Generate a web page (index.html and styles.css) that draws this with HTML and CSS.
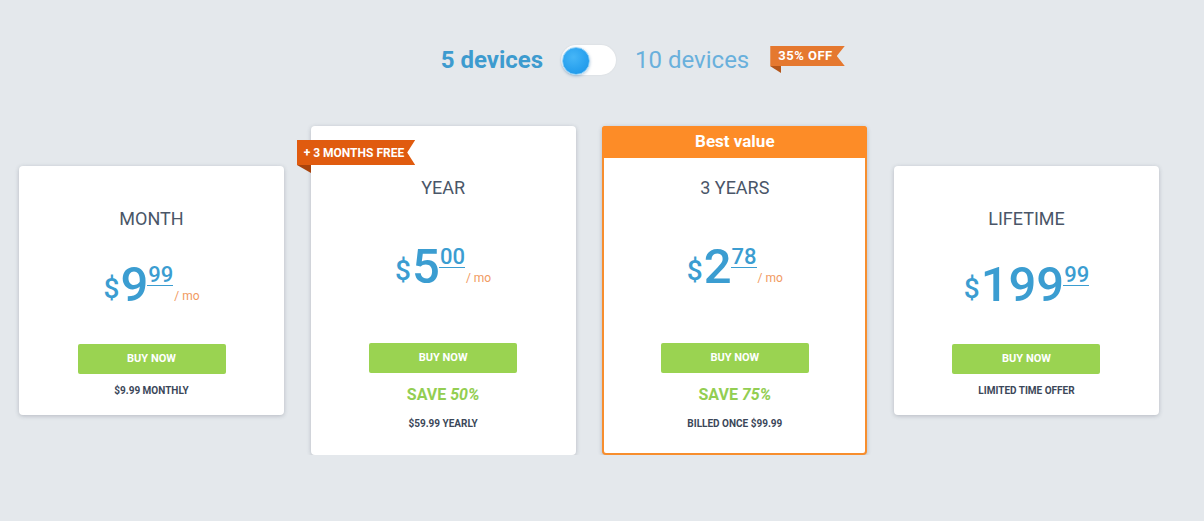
FILE: index.html
```html
<!DOCTYPE html>
<html lang="en">
<head>
<meta charset="utf-8">
<title>Pricing</title>
<link rel="stylesheet" href="styles.css">
</head>
<body>
<div class="page">
  <div class="switcher">
    <span class="opt active">5 devices</span>
    <span class="toggle"><span class="knob"></span></span>
    <span class="opt">10 devices<span class="badge"><span class="badge-body">35% OFF</span></span></span>
  </div>

  <div class="plans">
    <div class="card compact">
      <div class="title">MONTH</div>
      <div class="price"><span class="cur">$</span><span class="int">9</span><span class="cents">99</span><span class="per">/ mo</span></div>
      <a class="buy">BUY NOW</a>
      <div class="note">$9.99 MONTHLY</div>
    </div>

    <div class="card tall">
      <span class="ribbon"><span class="ribbon-body">+ 3 MONTHS FREE</span></span>
      <div class="title">YEAR</div>
      <div class="price"><span class="cur">$</span><span class="int">5</span><span class="cents">00</span><span class="per">/ mo</span></div>
      <a class="buy">BUY NOW</a>
      <div class="save">SAVE <em>50%</em></div>
      <div class="note">$59.99 YEARLY</div>
    </div>

    <div class="card tall best">
      <div class="best-head">Best value</div>
      <div class="title">3 YEARS</div>
      <div class="price"><span class="cur">$</span><span class="int">2</span><span class="cents">78</span><span class="per">/ mo</span></div>
      <a class="buy">BUY NOW</a>
      <div class="save">SAVE <em>75%</em></div>
      <div class="note">BILLED ONCE $99.99</div>
    </div>

    <div class="card compact">
      <div class="title">LIFETIME</div>
      <div class="price"><span class="cur">$</span><span class="int">199</span><span class="cents">99</span></div>
      <a class="buy">BUY NOW</a>
      <div class="note">LIMITED TIME OFFER</div>
    </div>
  </div>
</div>
</body>
</html>
```

FILE: styles.css
```css
* { box-sizing: border-box; }
html, body {
  margin: 0;
  padding: 0;
  background: #e4e8ec;
  font-family: Roboto, "Liberation Sans", Arial, sans-serif;
}
.page {
  width: 1140px;
  margin-left: 19px;
  padding-top: 45px;
}

/* device switcher */
.switcher {
  display: flex;
  justify-content: center;
  align-items: center;
  height: 30px;
  padding-left: 12px;
}
.opt {
  font-size: 24px;
  line-height: 30px;
  color: #69b0dc;
  position: relative;
}
.opt.active {
  font-weight: 700;
  color: #3d9bcf;
}
.toggle {
  position: relative;
  width: 55px;
  height: 30px;
  margin: 0 19px 0 18px;
  border-radius: 15px;
  background: #ffffff;
  box-shadow: 0 0 2px rgba(0, 0, 0, 0.08);
}
.knob {
  position: absolute;
  left: 1px;
  top: 2px;
  width: 28px;
  height: 28px;
  border-radius: 50%;
  background: radial-gradient(circle at 40% 35%, #46b6f7 0%, #2aa2ef 55%, #1b93e4 100%);
  border: 1px solid #8ccff7;
  box-shadow: 0 1px 3px rgba(20, 90, 150, 0.35);
}
.badge {
  position: absolute;
  left: calc(100% + 21px);
  top: 1px;
  display: block;
}
.badge-body {
  display: block;
  height: 20px;
  padding: 0 12px 0 8px;
  background: #e5782f;
  color: #ffffff;
  font-size: 13px;
  font-weight: 700;
  line-height: 20px;
  letter-spacing: 0.5px;
  white-space: nowrap;
  clip-path: polygon(0 0, 100% 0, calc(100% - 8px) 50%, 100% 100%, 0 100%);
}
.badge::after {
  content: "";
  position: absolute;
  left: 0;
  top: 100%;
  border-top: 7px solid #b5561a;
  border-left: 11px solid transparent;
}

/* plans */
.plans {
  display: grid;
  grid-template-columns: repeat(4, 265px);
  column-gap: 26.67px;
  align-items: center;
  margin-top: 51px;
}
.card {
  position: relative;
  background: #ffffff;
  border-radius: 4px;
  box-shadow: 0 1px 4px rgba(60, 70, 85, 0.28);
  display: flex;
  flex-direction: column;
  align-items: center;
}
.card.compact {
  height: 249px;
  padding-top: 42px;
}
.card.tall {
  height: 329px;
  padding-top: 51px;
}
.card.best {
  border: 2px solid #f78e2e;
  padding-top: 0;
}
.best-head {
  align-self: stretch;
  height: 32px;
  margin: -2px -2px 19px;
  background: #fd8c27;
  color: #ffffff;
  font-size: 17px;
  font-weight: 700;
  line-height: 31px;
  text-align: center;
  border-radius: 3px 3px 0 0;
}
.title {
  font-size: 18px;
  line-height: 22px;
  color: #4a5668;
}
.price {
  display: flex;
  justify-content: center;
  align-items: flex-start;
  color: #3b9dd1;
  line-height: 1;
  height: 50px;
}
.compact .price { margin-top: 30px; }
.tall .price { margin-top: 43px; }
.cur {
  font-size: 28px;
  line-height: 28px;
  font-weight: 500;
  margin-top: 15px;
  margin-right: 1px;
}
.int {
  font-size: 49px;
  line-height: 50px;
  font-weight: 500;
}
.cents {
  font-size: 22px;
  line-height: 20px;
  font-weight: 500;
  margin-top: 5px;
  margin-left: -1px;
  padding: 0 0 0 1px;
  border-bottom: 1px solid #3b9dd1;
}
.per {
  font-size: 12px;
  line-height: 13px;
  color: #f19a62;
  margin-top: 30px;
  margin-left: 1px;
}
.buy {
  display: block;
  width: 148px;
  height: 30px;
  border-radius: 2px;
  background: #9ad351;
  color: #ffffff;
  font-size: 11px;
  font-weight: 700;
  line-height: 30px;
  text-align: center;
}
.compact .buy { margin-top: 34px; }
.tall .buy { margin-top: 51px; }
.save {
  margin-top: 12px;
  font-size: 16px;
  line-height: 20px;
  font-weight: 700;
  color: #93ce52;
}
.save em { font-style: italic; }
.note {
  font-size: 10px;
  line-height: 14px;
  font-weight: 700;
  color: #3b4759;
}
.compact .note { margin-top: 10px; }
.tall .note { margin-top: 12px; }

/* ribbon */
.ribbon {
  position: absolute;
  left: -14px;
  top: 14px;
  display: block;
}
.ribbon-body {
  display: block;
  height: 25px;
  padding: 0 11px 0 7px;
  background: #e05b0f;
  color: #ffffff;
  font-size: 12px;
  font-weight: 700;
  line-height: 26px;
  white-space: nowrap;
  clip-path: polygon(0 0, 100% 0, calc(100% - 8px) 50%, 100% 100%, 0 100%);
}
.ribbon::after {
  content: "";
  position: absolute;
  left: 0;
  top: 100%;
  border-top: 8px solid #a9430c;
  border-left: 14px solid transparent;
}
```
